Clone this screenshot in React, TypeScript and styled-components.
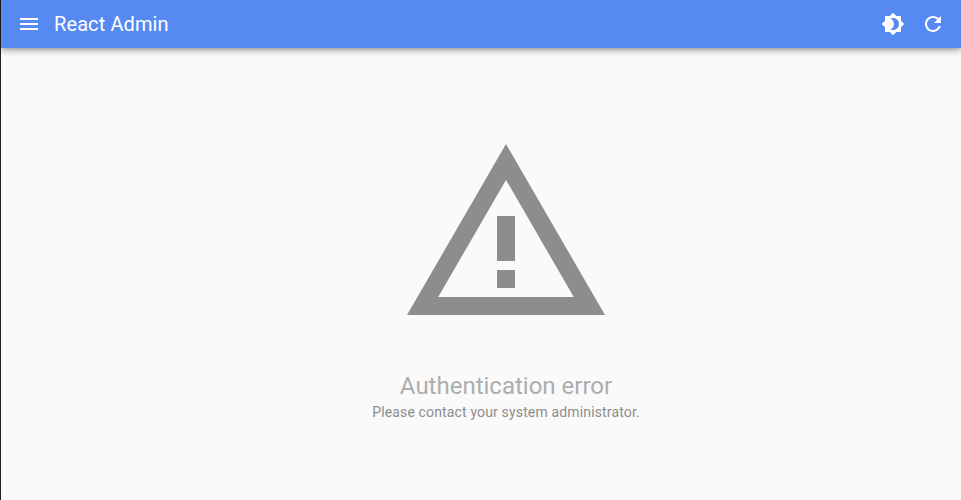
import React from "react";
import styled, { createGlobalStyle } from "styled-components";

const GlobalStyle = createGlobalStyle`
  * { box-sizing: border-box; }
  body {
    margin: 0;
    background: #fafafa;
    font-family: Roboto, sans-serif;
    overflow: hidden;
  }
`;

const Page = styled.div`
  display: flex;
  flex-direction: column;
  height: 100vh;
  border-left: 1px solid #212124;
`;

const AppBar = styled.header`
  display: flex;
  align-items: center;
  flex: none;
  height: 48px;
  padding: 0 8px;
  background: #568af2;
  color: #fff;
  box-shadow: 0 2px 4px -1px rgba(0, 0, 0, 0.2), 0 4px 5px 0 rgba(0, 0, 0, 0.14),
    0 1px 10px 0 rgba(0, 0, 0, 0.12);
`;

const IconButton = styled.button`
  display: flex;
  padding: 8px;
  border: 0;
  background: transparent;
  color: inherit;
`;

const Title = styled.h6`
  flex: 1;
  margin: 0 0 0 5px;
  font-size: 20px;
  font-weight: 400;
  line-height: 32px;
  letter-spacing: 0.1px;
`;

const Icon = styled.svg<{ $size: number }>`
  display: block;
  width: ${(p) => p.$size}px;
  height: ${(p) => p.$size}px;
  fill: currentColor;
`;

const Content = styled.main`
  display: flex;
  flex-direction: column;
  align-items: center;
  padding: 78px 0 0 50px;
`;

const Message = styled.div`
  display: flex;
  flex-direction: column;
  align-items: center;
  color: #8d8d8d;
`;

const Heading = styled.h5`
  margin: 28px 0 0;
  font-size: 24px;
  font-weight: 400;
  line-height: 32px;
  color: #adadad;
`;

const Detail = styled.p`
  margin: 0;
  font-size: 14px;
  line-height: 20px;
  letter-spacing: 0.15px;
`;

const icons = {
  menu: "M3 18h18v-2H3v2zm0-5h18v-2H3v2zm0-7v2h18V6H3z",
  theme:
    "M20 8.69V4h-4.69L12 .69 8.69 4H4v4.69L.69 12 4 15.31V20h4.69L12 23.31 15.31 20H20v-4.69L23.31 12 20 8.69zM12 18c-.89 0-1.74-.2-2.5-.55C11.56 16.5 13 14.42 13 12s-1.44-4.5-3.5-5.45C10.26 6.2 11.11 6 12 6c3.31 0 6 2.69 6 6s-2.69 6-6 6z",
  refresh:
    "M17.65 6.35C16.2 4.9 14.21 4 12 4c-4.42 0-7.99 3.58-7.99 8s3.57 8 7.99 8c3.73 0 6.84-2.55 7.73-6h-2.08c-.82 2.33-3.04 4-5.65 4-3.31 0-6-2.69-6-6s2.69-6 6-6c1.66 0 3.14.69 4.22 1.78L13 11h7V4l-2.35 2.35z",
  warning:
    "M12 5.99L19.53 19H4.47L12 5.99M12 2L1 21h22L12 2zm1 14h-2v2h2v-2zm0-6h-2v5h2v-5z",
};

function Glyph({ name, size = 24 }: { name: keyof typeof icons; size?: number }) {
  return (
    <Icon $size={size} viewBox="0 0 24 24" aria-hidden="true">
      <path d={icons[name]} />
    </Icon>
  );
}

export default function App() {
  return (
    <>
      <GlobalStyle />
      <Page>
        <AppBar>
          <IconButton aria-label="Open menu">
            <Glyph name="menu" />
          </IconButton>
          <Title>React Admin</Title>
          <IconButton aria-label="Toggle theme">
            <Glyph name="theme" />
          </IconButton>
          <IconButton aria-label="Refresh">
            <Glyph name="refresh" />
          </IconButton>
        </AppBar>
        <Content>
          <Message>
            <Glyph name="warning" size={216} />
            <Heading>Authentication error</Heading>
            <Detail>Please contact your system administrator.</Detail>
          </Message>
        </Content>
      </Page>
    </>
  );
}
